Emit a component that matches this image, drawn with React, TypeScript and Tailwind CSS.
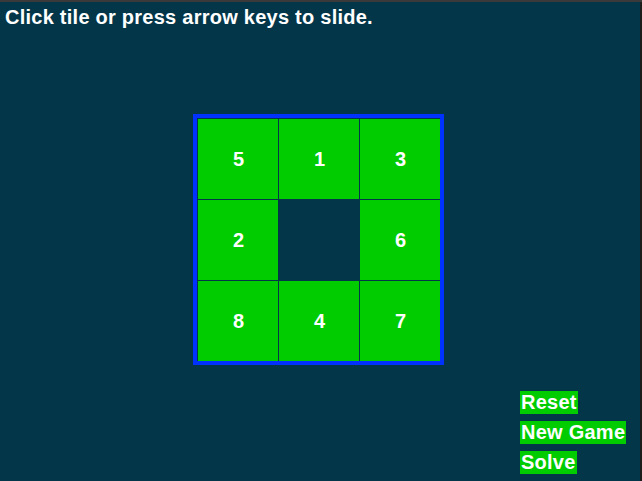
import React from 'react';

const tiles: (number | null)[] = [5, 1, 3, 2, null, 6, 8, 4, 7];
const buttons = ['Reset', 'New Game', 'Solve'];

export default function App() {
  return (
    <div className="w-[642px] h-[481px] flex flex-col bg-[#033649] overflow-hidden font-['Liberation_Sans',Arial,sans-serif] font-bold text-white">
      <div className="h-[2px] w-full bg-[#3a3a3a]" />
      <div className="flex flex-1">
        <div className="w-[640px] flex flex-col">
          <div className="mt-[4px] ml-[5px] text-[20px] leading-[22px] tracking-[0.25px]">Click tile or press arrow keys to slide.</div>

          {/* board */}
          <div className="mt-[86px] ml-[193px] w-[251px] h-[251px] border-4 border-[#0032ff] pt-[1px] pl-[1px]">
            <div className="grid grid-cols-[repeat(3,80px)] grid-rows-[repeat(3,80px)] gap-[1px]">
              {tiles.map((t, i) =>
                t === null ? (
                  <div key={i} />
                ) : (
                  <div key={i} className="bg-[#00cc00] flex items-center justify-center text-[20px] pl-[1px]">
                    {t}
                  </div>
                )
              )}
            </div>
          </div>

          <div className="mt-[26px] ml-[520px] flex flex-col items-start gap-[7px]">
            {buttons.map((b) => (
              <div key={b} className="bg-[#00cc00] h-[23px] px-[1px] text-[20px] leading-[23px] tracking-[0.25px]">
                {b}
              </div>
            ))}
          </div>
        </div>
        <div className="w-[2px] bg-[#1c1c1c]" />
      </div>
    </div>
  );
}
